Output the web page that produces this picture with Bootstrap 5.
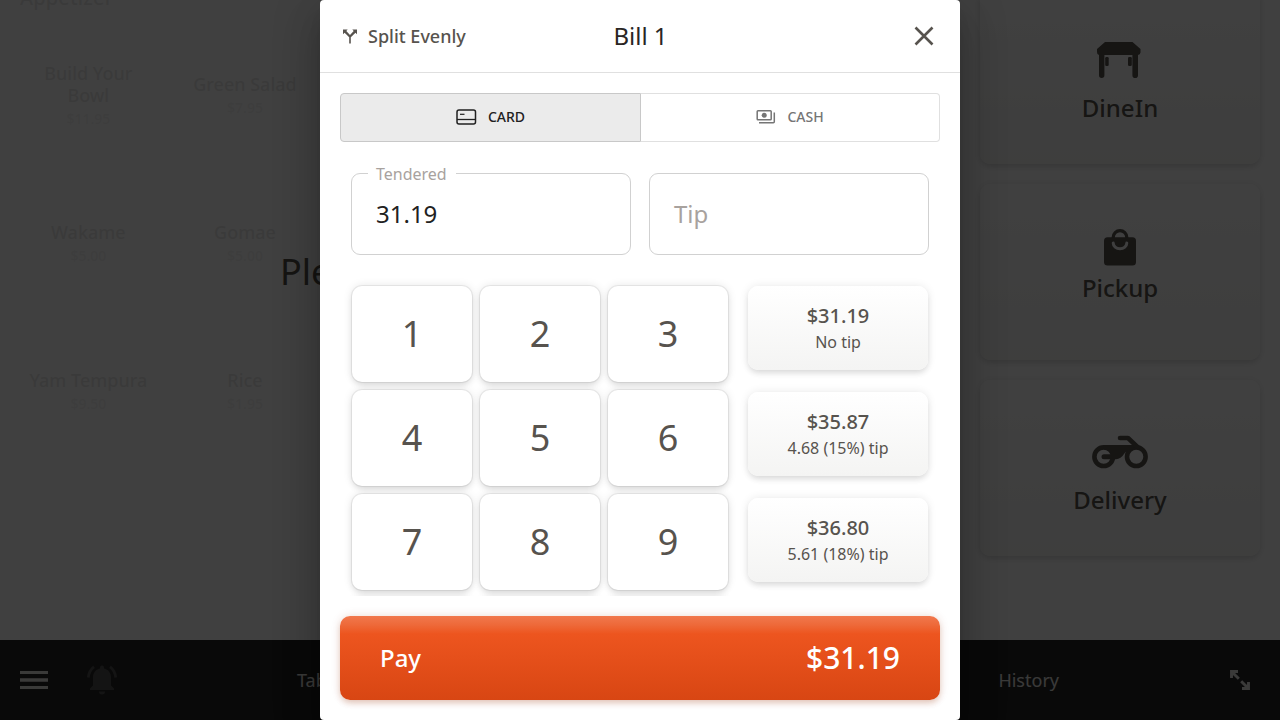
<!DOCTYPE html>
<html lang="en">
<head>
<meta charset="utf-8">
<meta name="viewport" content="width=device-width, initial-scale=1">
<title>Bill 1</title>
<link href="https://cdn.jsdelivr.net/npm/bootstrap@5.3.0/dist/css/bootstrap.min.css" rel="stylesheet">
<style>
  body { font-family: "Noto Sans", sans-serif; color: #57534e; background: #fff; }
  svg { display: block; flex: none; }
  .pos-app { height: 720px; }
  .fw-mid { font-weight: 500; }

  /* menu behind the dialog */
  .menu-side { width: 960px; }
  .menu-faded { opacity: .12; color: #44403c; }
  .menu-title { font-size: 20px; line-height: 24px; letter-spacing: .15px; padding-left: 20px; margin-top: -14px; height: 36.5px; }
  .menu-grid { display: grid; grid-template-columns: repeat(6, 156.66px); grid-auto-rows: 148px; padding: 0 10px; }
  .dish { font-size: 18px; line-height: 22px; padding: 0 16px; }
  .dish small { font-size: 14px; line-height: 24px; margin-top: 1px; opacity: .5; }
  .prompt { left: 280px; top: 245px; font-size: 36px; line-height: 54px; }
  .type-list { width: 320px; padding: 0 20px; gap: 20px; margin-top: -12px; }
  .type-card { height: 176px; border-radius: 10px; background: linear-gradient(#fff, #f5f5f4);
    box-shadow: 0 4px 6px -1px rgba(0,0,0,.10), 0 0 8px rgba(0,0,0,.08); font-size: 24px; line-height: 32px; }
  .type-icon { height: 64px; }
  .type-icon.short { height: 32px; align-items: flex-end !important; padding-bottom: 6px; }
  .tabbar { height: 80px; background: #262626; color: #e7e5e4; font-size: 18px; padding: 0 30px 0 20px; }

  /* dialog */
  .veil { background: rgba(0,0,0,.75); }
  .bill { width: 640px; border-radius: 4px; background: #fff;
    box-shadow: 0 11px 15px -7px rgba(0,0,0,.2), 0 24px 38px 3px rgba(0,0,0,.14), 0 9px 46px 8px rgba(0,0,0,.12); }
  .bill-head { height: 73px; border-bottom: 1px solid #e0e0e0; padding: 0 26px 0 22px; }
  .bill-head > * { flex: 1 1 0; }
  .bill-name { font-size: 24px; color: #292524; padding-left: 5px; }
  .split { font-size: 18px; gap: 9px; }
  .pay-kind { height: 49px; margin: 20px 20px 0; }
  .pay-kind .kind { border: 1px solid #e0e0e0; font-size: 14px; color: #757575; gap: 11px; padding-bottom: 1px; }
  .pay-kind .kind span { margin-top: -1px; }
  .pay-kind .kind.active { width: 301px; flex: none; background: #ebebeb; border-color: #c8c8c8; color: #212121; border-radius: 4px 0 0 4px; }
  .pay-kind .kind:last-child { border-left: 0; border-radius: 0 4px 4px 0; }
  .amounts { margin: 31px 31px 0; gap: 18px; }
  .amount { height: 82px; border: 1px solid #d1d1d1; border-radius: 9px; padding: 0 24px; font-size: 24px; color: #212121; }
  .amount .hint { color: #a8a29e; }
  .notch { left: 16px; top: -12px; padding: 0 9px 0 8px; background: #fff; font-size: 16px; line-height: 24px; color: #a8a29e; }
  .pad-row { padding: 0 31px; height: 341px; overflow: hidden; }
  .keys { display: grid; grid-template-columns: repeat(3, 120px); grid-auto-rows: 96px; gap: 8px; padding: 31px 0 0 1px; }
  .key { border-radius: 10px; background: #fff; font-size: 36px;
    box-shadow: 0 0 0 1px rgba(0,0,0,.06), 0 4px 6px -1px rgba(0,0,0,.10), 0 0 10px rgba(0,0,0,.11); }
  .tips { width: 180px; gap: 22px; padding-top: 31px; margin-left: 20px; }
  .tip { height: 84px; border-radius: 10px; background: linear-gradient(#fff, #f4f4f3);
    box-shadow: 0 4px 6px -1px rgba(0,0,0,.11), 0 0 10px rgba(0,0,0,.09); font-size: 16px; line-height: 24px; }
  .tip b { font-size: 20px; line-height: 28px; font-weight: 500; }
  .pay { height: 84px; margin: 20px 20px 0; padding: 0 40px; border: 0; border-radius: 10px; color: #fff; font-size: 24px;
    background: linear-gradient(#f1784d 0, #ee6939 9px, #ed551f 18px, #d84613 100%);
    box-shadow: 0 4px 6px -1px rgba(150,50,10,.22), 0 0 10px rgba(150,50,10,.16); }
  .pay .total { font-size: 30px; margin-top: -1px; }
</style>
</head>
<body>
<div class="pos-app d-flex flex-column overflow-hidden position-relative">
  <div class="d-flex overflow-hidden" style="height:640px">
    <section class="menu-side position-relative">
      <div class="menu-faded">
        <div class="menu-title fw-mid">Appetizer</div>
        <div class="menu-grid">
          <div class="dish d-flex flex-column justify-content-center text-center fw-mid">Build Your Bowl<small>$11.95</small></div>
          <div class="dish d-flex flex-column justify-content-center text-center fw-mid px-0">Green Salad<small>$7.95</small></div>
          <div></div><div></div><div></div><div></div>
          <div class="dish d-flex flex-column justify-content-center text-center fw-mid">Wakame<small>$5.00</small></div>
          <div class="dish d-flex flex-column justify-content-center text-center fw-mid">Gomae<small>$5.00</small></div>
          <div></div><div></div><div></div><div></div>
          <div class="dish d-flex flex-column justify-content-center text-center fw-mid">Yam Tempura<small>$9.50</small></div>
          <div class="dish d-flex flex-column justify-content-center text-center fw-mid">Rice<small>$1.95</small></div>
        </div>
      </div>
      <div class="prompt position-absolute text-nowrap">Please select order type</div>
    </section>
    <aside class="type-list d-flex flex-column">
      <div class="type-card flex-shrink-0 d-flex flex-column align-items-center justify-content-center fw-mid">
        <div class="type-icon d-flex align-items-center">
          <svg width="56" height="40" viewBox="0 0 56 40" fill="currentColor"><path d="M13 2h27.500l8 7v3.500a3 3 0 0 1-2.500 2.500v20.300a2.700 2.700 0 0 1-5.600 0V15H12.400v20.300a2.700 2.700 0 0 1-5.400 0V15A3 3 0 0 1 5 12V9z"/><rect x="13.200" y="17" width="3.500" height="9" rx="1.200"/><rect x="36" y="17" width="3.800" height="9" rx="1.200"/></svg>
        </div>
        DineIn
      </div>
      <div class="type-card flex-shrink-0 d-flex flex-column align-items-center justify-content-center fw-mid">
        <div class="type-icon short d-flex">
          <svg width="32" height="38" viewBox="0 0 32 38" fill="none" stroke="currentColor"><path d="M9.200 12V9.500a6.800 6.800 0 0 1 13.600 0V12" stroke-width="3.300"/><rect x="0" y="9.300" width="32" height="28.200" rx="3.500" fill="currentColor" stroke="none"/><path d="M9.200 15a6.800 5.700 0 0 0 13.600 0" stroke="#fafafa" stroke-width="3" stroke-linecap="round"/></svg>
        </div>
        Pickup
      </div>
      <div class="type-card flex-shrink-0 d-flex flex-column align-items-center justify-content-center fw-mid">
        <div class="type-icon d-flex align-items-center">
          <svg width="56" height="34" viewBox="0 0 56 34" fill="none" stroke="currentColor" stroke-width="4.600"><circle cx="11.700" cy="21.700" r="9.300"/><circle cx="44.300" cy="21.700" r="9.300"/><path d="M28 3h8l10 9.500" stroke-linecap="round" stroke-linejoin="round"/><path d="M11.700 10H42l-1 4q-7 1-9 5-3 5-8 5.200H12a2.500 2.500 0 0 1 0-5h7q-1-4-7.300-5z" fill="currentColor" stroke="none"/></svg>
        </div>
        Delivery
      </div>
    </aside>
  </div>
  <nav class="tabbar d-flex align-items-center flex-shrink-0">
    <svg width="28" height="18" viewBox="0 0 28 18" fill="currentColor"><path d="M0 0h28v3H0zM0 7.300h28v3.400H0zM0 15h28v3H0z"/></svg>
    <svg style="margin-left:38px;opacity:.22" width="32" height="32" viewBox="0 0 32 32" fill="currentColor"><path d="M14 3.500a2 2 0 0 1 4 0v1c4.500 1 7 4.500 7 9v8l3 3V26H4v-1.500l3-3v-8c0-4.500 2.500-8 7-9zM13 27.500h6a3 3 0 0 1-6 0z"/><path d="M2.300 13.500Q3 6.500 8 2.800M29.700 13.500Q29 6.500 24 2.800" fill="none" stroke="currentColor" stroke-width="2.700"/></svg>
    <span style="margin-left:179px">Tables</span>
    <span class="ms-auto">History</span>
    <svg style="margin-left:171px" width="20" height="20" viewBox="0 0 20 20" fill="none" stroke="currentColor" stroke-width="2.900"><path d="M1.500 8V1.500H8M2 2l6.800 6.800M12 18.500h6.500V12M18 18l-6.800-6.800"/><path d="M1 1h6L1 7zM19 19h-6l6-6z" fill="currentColor" stroke="none"/></svg>
  </nav>

  <div class="veil position-absolute top-0 start-0 w-100 h-100 d-flex justify-content-center overflow-hidden">
    <div class="bill h-100 d-flex flex-column" role="dialog" aria-label="Bill 1">
      <header class="bill-head d-flex align-items-center flex-shrink-0">
        <div class="split d-flex align-items-center fw-mid">
          <svg width="17" height="17" viewBox="0 0 17 17" fill="currentColor"><path d="M1 1.500h4.700L4.300 3 8 6.900 11.700 3l-1.400-1.500H15v4.700l-1.500-1.500L8.800 9.200v6.300H7.200V9.200L2.600 4.700 1 6.200z"/></svg>
          Split Evenly
        </div>
        <div class="bill-name text-center">Bill 1</div>
        <div class="d-flex justify-content-end">
          <svg width="20" height="20" viewBox="0 0 20 20" fill="none" stroke="currentColor" stroke-width="2.600"><path d="M1.500 1.500l17 17M18.500 1.500l-17 17"/></svg>
        </div>
      </header>

      <div class="pay-kind d-flex flex-shrink-0">
        <div class="kind active d-flex align-items-center justify-content-center fw-mid">
          <svg width="21" height="16" viewBox="0 0 21 16" fill="none" stroke="currentColor" stroke-width="1.500"><rect x="1" y=".9" width="18.500" height="14" rx="2"/><path d="M1 10.500h19" stroke-width="1.300"/><path d="M4 5.300h4.500" stroke-width="1.200"/></svg>
          <span>CARD</span>
        </div>
        <div class="kind flex-grow-1 d-flex align-items-center justify-content-center fw-mid">
          <svg width="20" height="16" viewBox="0 0 20 16" fill="none" stroke="currentColor" stroke-width="1.500"><rect x="1.200" y="1.700" width="14" height="9" rx=".8"/><circle cx="8.200" cy="6.200" r="2.500" fill="currentColor" stroke="none"/><path d="M18.300 3.500v9.300q0 1-1 1H3"/></svg>
          <span>CASH</span>
        </div>
      </div>

      <div class="amounts d-flex flex-shrink-0">
        <div class="amount flex-fill w-50 d-flex align-items-center position-relative"><span class="notch position-absolute">Tendered</span>31.19</div>
        <div class="amount flex-fill w-50 d-flex align-items-center"><span class="hint">Tip</span></div>
      </div>

      <div class="pad-row d-flex flex-shrink-0">
        <div class="keys">
          <div class="key d-flex align-items-center justify-content-center">1</div>
          <div class="key d-flex align-items-center justify-content-center">2</div>
          <div class="key d-flex align-items-center justify-content-center">3</div>
          <div class="key d-flex align-items-center justify-content-center">4</div>
          <div class="key d-flex align-items-center justify-content-center">5</div>
          <div class="key d-flex align-items-center justify-content-center">6</div>
          <div class="key d-flex align-items-center justify-content-center">7</div>
          <div class="key d-flex align-items-center justify-content-center">8</div>
          <div class="key d-flex align-items-center justify-content-center">9</div>
          <div class="key"></div><div class="key"></div><div class="key"></div>
        </div>
        <div class="tips d-flex flex-column">
          <div class="tip flex-shrink-0 d-flex flex-column align-items-center justify-content-center"><b>$31.19</b>No tip</div>
          <div class="tip flex-shrink-0 d-flex flex-column align-items-center justify-content-center"><b>$35.87</b>4.68 (15%) tip</div>
          <div class="tip flex-shrink-0 d-flex flex-column align-items-center justify-content-center"><b>$36.80</b>5.61 (18%) tip</div>
        </div>
      </div>

      <button type="button" class="pay d-flex align-items-center justify-content-between flex-shrink-0 fw-mid">
        <span>Pay</span><span class="total">$31.19</span>
      </button>
    </div>
  </div>
</div>
<script src="https://cdn.jsdelivr.net/npm/bootstrap@5.3.0/dist/js/bootstrap.bundle.min.js"></script>
</body>
</html>
